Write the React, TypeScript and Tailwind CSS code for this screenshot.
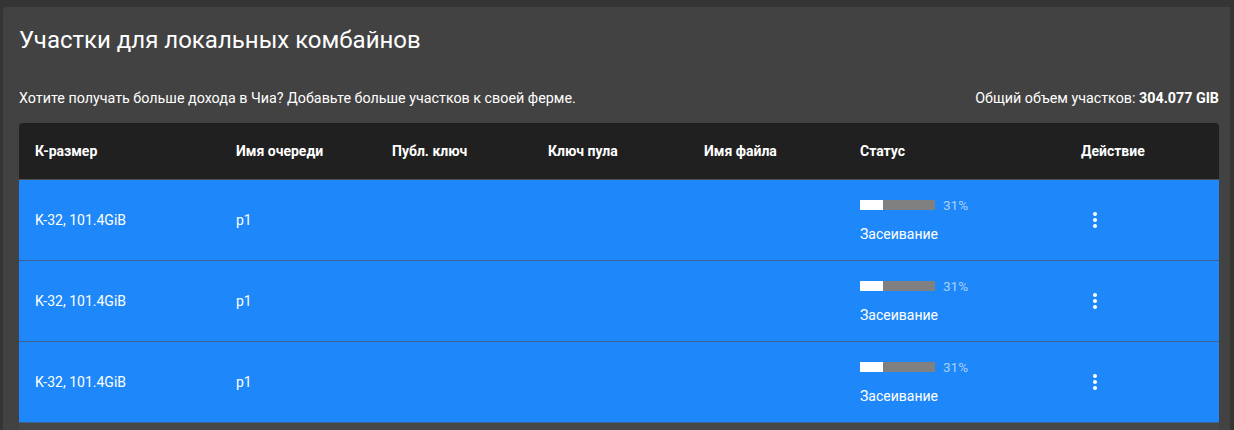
type PlotRow = {
  id: string
  size: string
  queue: string
  progress: number
  status: string
}

const rows: PlotRow[] = [
  { id: 'a', size: 'K-32, 101.4GiB', queue: 'p1', progress: 31, status: 'Засеивание' },
  { id: 'b', size: 'K-32, 101.4GiB', queue: 'p1', progress: 31, status: 'Засеивание' },
  { id: 'c', size: 'K-32, 101.4GiB', queue: 'p1', progress: 31, status: 'Засеивание' },
]

function MoreVert() {
  return (
    <svg width="24" height="24" viewBox="0 0 24 24" fill="white">
      <path d="M12 8c1.1 0 2-.9 2-2s-.9-2-2-2-2 .9-2 2 .9 2 2 2zm0 2c-1.1 0-2 .9-2 2s.9 2 2 2 2-.9 2-2-.9-2-2-2zm0 6c-1.1 0-2 .9-2 2s.9 2 2 2 2-.9 2-2-.9-2-2-2z" />
    </svg>
  )
}

function Progress({ value }: { value: number }) {
  return (
    <div className="flex items-center gap-2">
      <div className="flex h-[10px] w-[75px] bg-[#808080]">
        <div className="h-full bg-white" style={{ width: `${value}%` }} />
      </div>
      <span className="text-[13.5px] leading-none text-[#a9cef8]">{value}%</span>
    </div>
  )
}

function Th({ children, w }: { children?: React.ReactNode; w: string }) {
  return (
    <div className={`${w} px-4 text-sm font-bold text-white`}>{children}</div>
  )
}

export default function App() {
  return (
    <div className="min-h-[430px] bg-[#353535] pl-[3px] pt-[7px] font-['Roboto','Noto_Sans',sans-serif]">
      <div className="h-[430px] w-[1227px] overflow-hidden rounded-tl bg-[#424242] px-4 pt-[19px]">
        <h1 className="text-[24px] leading-[28px] text-white">Участки для локальных комбайнов</h1>

        <div className="mt-[34px] flex w-[1200px] items-center justify-between text-[14.3px] text-white">
          <span>Хотите получать больше дохода в Чиа? Добавьте больше участков к своей ферме.</span>
          <span>
            Общий объем участков: <span className="font-bold">304.077 GIB</span>
          </span>
        </div>

        <div className="mt-[14px] w-[1200px] overflow-hidden rounded-t">
          <div className="flex h-[57px] items-center border-b border-[#515151] bg-[#202020]">
            <Th w="w-[201px]">К-размер</Th>
            <Th w="w-[156px]">Имя очереди</Th>
            <Th w="w-[156px]">Публ. ключ</Th>
            <Th w="w-[156px]">Ключ пула</Th>
            <Th w="w-[156px]">Имя файла</Th>
            <Th w="w-[221px]">Статус</Th>
            <Th w="w-[154px]">Действие</Th>
          </div>

          {rows.map((row) => (
            <div
              key={row.id}
              className="flex h-[81px] items-center border-b border-[#3b6391] bg-[#1e88fb] text-sm text-white"
            >
              <div className="w-[201px] px-4">{row.size}</div>
              <div className="w-[156px] px-4">{row.queue}</div>
              <div className="w-[156px] px-4" />
              <div className="w-[156px] px-4" />
              <div className="w-[156px] px-4" />
              <div className="flex w-[221px] flex-col gap-[12px] px-4 pt-[2px]">
                <Progress value={row.progress} />
                <span>{row.status}</span>
              </div>
              <div className="w-[154px] pl-[18px]">
                <MoreVert />
              </div>
            </div>
          ))}
          <div className="h-[20px] bg-[#474747]" />
        </div>
      </div>
    </div>
  )
}
